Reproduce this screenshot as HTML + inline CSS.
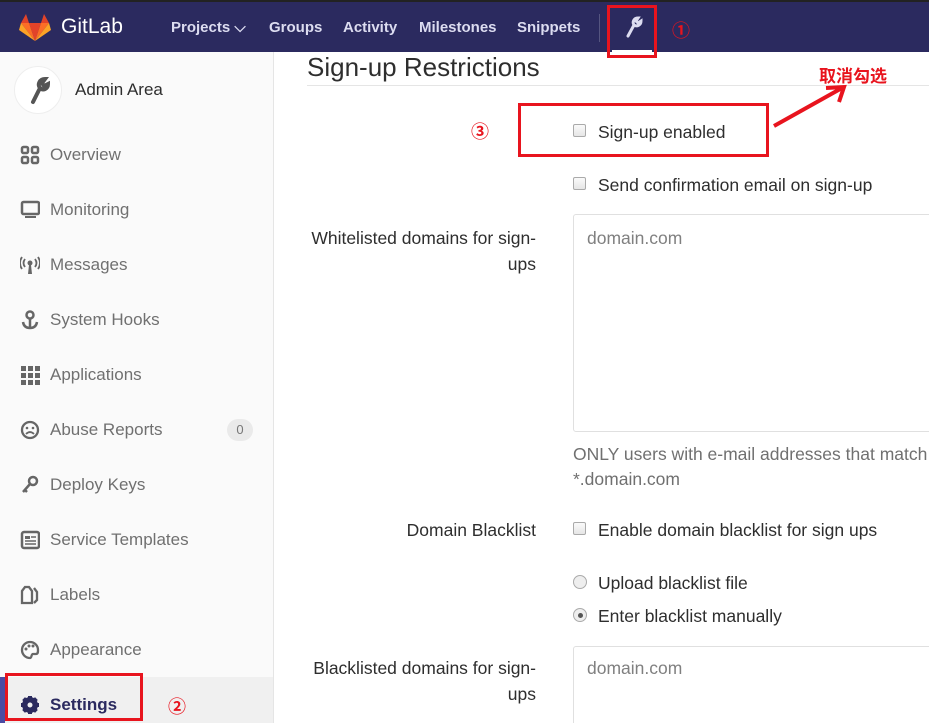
<!DOCTYPE html>
<html><head><meta charset="utf-8"><style>
*{box-sizing:border-box;margin:0;padding:0}
html,body{width:929px;height:723px;overflow:hidden}
body{background:#fff;font-family:"Liberation Sans","Noto Sans CJK SC",sans-serif;position:relative}
.nav{position:absolute;left:0;top:0;width:929px;height:52px;background:#2b2a5f;border-top:2px solid #222}
.nav span{position:absolute;top:17px;color:#dcdcf0;font-size:15px;font-weight:bold}
.side{position:absolute;left:0;top:52px;width:274px;height:671px;background:#fafafa;border-right:1px solid #e5e5e5}
.it{position:absolute;left:50px;font-size:17px;color:#707070}
.ab{position:absolute;font-size:17.5px;color:#2e2e2e;white-space:nowrap}
.lbl{position:absolute;right:393px;text-align:right;font-size:17.5px;color:#2e2e2e;line-height:26px;white-space:nowrap}
.cb{position:absolute;left:573px;width:13px;height:13px;border:1px solid #aaa;border-radius:2px;background:linear-gradient(#fafafa,#e6e6e6)}
.rd{position:absolute;left:573px;width:14px;height:14px;border:1px solid #aaa;border-radius:50%;background:#eee}
.ta{position:absolute;left:573px;width:400px;border:1px solid #e0e0e0;border-radius:3px}
.ph{position:absolute;font-size:17.5px;color:#808080}
.red{position:absolute;border:3px solid #e8141e}
.num{position:absolute;color:#e8141e;font-size:18px;font-weight:bold;font-family:"Noto Sans CJK SC",sans-serif}
</style></head><body>
<div class="nav">
<svg style="position:absolute;left:19px;top:10px" width="32" height="30" viewBox="0 0 32 30"><path d="M16 29L22 11H10Z" fill="#e24329"/><path d="M16 29L10 11H2Z" fill="#fc6d26"/><path d="M2 11L0 18L16 29Z" fill="#fca326"/><path d="M2 11H10L7 2Z" fill="#e24329"/><path d="M16 29L22 11H30Z" fill="#fc6d26"/><path d="M30 11L32 18L16 29Z" fill="#fca326"/><path d="M30 11H22L25 2Z" fill="#e24329"/></svg>
<span style="left:61px;top:13px;font-size:21px;font-weight:normal;color:#fff">GitLab</span>
<span style="left:171px">Projects ⌵</span>
<span style="left:269px">Groups</span>
<span style="left:343px">Activity</span>
<span style="left:419px">Milestones</span>
<span style="left:517px">Snippets</span>
<div style="position:absolute;left:599px;top:12px;width:1px;height:28px;background:#555580"></div>
<svg style="position:absolute;left:624px;top:14px" width="20" height="22" viewBox="0 0 20 22"><path d="M4 20L10 9M10 9C8 6 10 2 14 2L12 5L14 7L17 5C17 9 13 11 10 9" stroke="#dcdcf0" stroke-width="3" fill="none" stroke-linecap="round"/></svg>
<div style="position:absolute;left:612px;top:48px;width:40px;height:2px;background:#fff"></div>
</div>
<div class="side">
<div style="position:absolute;left:14px;top:14px;width:48px;height:48px;border-radius:50%;background:#fff;border:1px solid #eee"></div>
<svg style="position:absolute;left:28px;top:25px" width="22" height="28" viewBox="0 0 22 28"><path d="M5 25L12 11M12 11C9 7 12 2 17 2L14 6L16 9L20 7C20 12 15 14 12 11" stroke="#555" stroke-width="4" fill="none" stroke-linecap="round"/></svg>
<div class="ab" style="left:75px;top:28px;font-size:17px">Admin Area</div>
</div>
<div class="it" style="top:145px">Overview</div>
<div class="it" style="top:200px">Monitoring</div>
<div class="it" style="top:255px">Messages</div>
<div class="it" style="top:310px">System Hooks</div>
<div class="it" style="top:365px">Applications</div>
<div class="it" style="top:420px">Abuse Reports</div>
<div style="position:absolute;left:227px;top:419px;width:26px;height:22px;border-radius:11px;background:#eaeaea;color:#777;font-size:13px;text-align:center;line-height:22px">0</div>
<div class="it" style="top:475px">Deploy Keys</div>
<div class="it" style="top:530px">Service Templates</div>
<div class="it" style="top:585px">Labels</div>
<div class="it" style="top:640px">Appearance</div>
<div style="position:absolute;left:0;top:677px;width:273px;height:46px;background:#f0f0f0"></div>
<div style="position:absolute;left:0;top:677px;width:5px;height:46px;background:#4b4ba3"></div>
<div class="it" style="top:695px;color:#2b2a5f;font-weight:bold">Settings</div>
<svg style="position:absolute;left:20px;top:145px" width="20" height="20"><g fill="none" stroke="#666" stroke-width="2.5"><rect x="2" y="2" width="6" height="6" rx="1.5"/><rect x="12" y="2" width="6" height="6" rx="1.5"/><rect x="2" y="12" width="6" height="6" rx="1.5"/><rect x="12" y="12" width="6" height="6" rx="1.5"/></g></svg>
<svg style="position:absolute;left:20px;top:200px" width="20" height="20"><rect x="2" y="2" width="17" height="12" rx="1.5" fill="none" stroke="#666" stroke-width="2.5"/><rect x="5" y="16" width="11" height="2" fill="#666"/></svg>
<svg style="position:absolute;left:20px;top:255px" width="20" height="20"><circle cx="10" cy="8" r="2.5" fill="#666"/><path d="M9 10L8 19H12L11 10" fill="#666"/><path d="M5 4Q2 8 5 12M15 4Q18 8 15 12M2 2Q-2 8 2 14M18 2Q22 8 18 14" stroke="#666" stroke-width="1.8" fill="none"/></svg>
<svg style="position:absolute;left:20px;top:310px" width="20" height="20"><circle cx="10" cy="5" r="3.5" fill="none" stroke="#666" stroke-width="2.5"/><path d="M10 8V18M3 12Q4 18 10 18Q16 18 17 12" stroke="#666" stroke-width="2.5" fill="none"/></svg>
<svg style="position:absolute;left:20px;top:365px" width="20" height="20" fill="#666"><rect x="1" y="1" width="5" height="5"/><rect x="8" y="1" width="5" height="5"/><rect x="15" y="1" width="5" height="5"/><rect x="1" y="8" width="5" height="5"/><rect x="8" y="8" width="5" height="5"/><rect x="15" y="8" width="5" height="5"/><rect x="1" y="15" width="5" height="5"/><rect x="8" y="15" width="5" height="5"/><rect x="15" y="15" width="5" height="5"/></svg>
<svg style="position:absolute;left:20px;top:420px" width="20" height="20"><circle cx="10" cy="10" r="8" fill="none" stroke="#666" stroke-width="2.3"/><circle cx="7" cy="8" r="1.3" fill="#666"/><circle cx="13" cy="8" r="1.3" fill="#666"/><path d="M6 14Q10 10 14 14" stroke="#666" stroke-width="1.8" fill="none"/></svg>
<svg style="position:absolute;left:20px;top:475px" width="20" height="20"><circle cx="13" cy="6" r="4" fill="none" stroke="#666" stroke-width="2.5"/><path d="M10 9L3 17M5 15L7 17" stroke="#666" stroke-width="2.5"/></svg>
<svg style="position:absolute;left:20px;top:530px" width="20" height="20"><rect x="2" y="2" width="17" height="16" rx="2" fill="none" stroke="#666" stroke-width="2.5"/><rect x="5" y="6" width="5" height="3" fill="#666"/><path d="M11 7H16M5 11H16M5 14H16" stroke="#666" stroke-width="1.5"/></svg>
<svg style="position:absolute;left:20px;top:585px" width="20" height="20"><path d="M2 6L5 2H9L12 6V18H2Z" fill="none" stroke="#666" stroke-width="2.3"/><path d="M14 3L17 7V15L14 18" fill="none" stroke="#666" stroke-width="2.3"/></svg>
<svg style="position:absolute;left:20px;top:640px" width="20" height="20"><path d="M10 2A8 8 0 1 0 10 18C12 18 11 14 13 14H16C18 14 18 12 18 10A8 8 0 0 0 10 2Z" fill="none" stroke="#666" stroke-width="2.3"/><circle cx="6" cy="9" r="1.5" fill="#666"/><circle cx="9" cy="6" r="1.5" fill="#666"/><circle cx="13" cy="6" r="1.5" fill="#666"/></svg>
<svg style="position:absolute;left:20px;top:695px" width="20" height="20"><circle cx="10" cy="10" r="6" fill="none" stroke="#2b2a5f" stroke-width="4"/><g stroke="#2b2a5f" stroke-width="4"><path d="M10 1V19M1 10H19M3.6 3.6L16.4 16.4M16.4 3.6L3.6 16.4"/></g><circle cx="10" cy="10" r="2.5" fill="#f0f0f0"/></svg>

<div class="ab" style="left:307px;top:52px;font-size:26px">Sign-up Restrictions</div>
<div style="position:absolute;left:307px;top:85px;width:622px;height:1px;background:#e5e5e5"></div>
<div class="cb" style="top:124px"></div><div class="ab" style="left:598px;top:122px">Sign-up enabled</div>
<div class="cb" style="top:177px"></div><div class="ab" style="left:598px;top:175px">Send confirmation email on sign-up</div>
<div class="lbl" style="top:225px">Whitelisted domains for sign-<br>ups</div>
<div class="ta" style="top:214px;height:218px"></div>
<div class="ph" style="left:587px;top:228px">domain.com</div>
<div class="ab" style="left:573px;top:442px;color:#707070;line-height:25px">ONLY users with e-mail addresses that match the<br>*.domain.com</div>
<div class="lbl" style="top:517px">Domain Blacklist</div>
<div class="cb" style="top:522px"></div><div class="ab" style="left:598px;top:520px">Enable domain blacklist for sign ups</div>
<div class="rd" style="top:575px"></div><div class="ab" style="left:598px;top:573px">Upload blacklist file</div>
<div class="rd" style="top:608px"></div><div style="position:absolute;left:578px;top:613px;width:5px;height:5px;border-radius:50%;background:#555"></div><div class="ab" style="left:598px;top:606px">Enter blacklist manually</div>
<div class="lbl" style="top:655px">Blacklisted domains for sign-<br>ups</div>
<div class="ta" style="top:646px;height:100px"></div>
<div class="ph" style="left:587px;top:658px">domain.com</div>

<div class="red" style="left:607px;top:5px;width:50px;height:53px"></div>
<div class="red" style="left:518px;top:103px;width:251px;height:54px"></div>
<div class="red" style="left:5px;top:673px;width:138px;height:48px"></div>
<div class="num" style="left:672px;top:17px">①</div>
<div class="num" style="left:168px;top:693px">②</div>
<div class="num" style="left:471px;top:118px">③</div>
<svg style="position:absolute;left:770px;top:80px" width="80" height="52"><path d="M4 46L72 8M56 8L74 7L69 22" stroke="#e8141e" stroke-width="4" fill="none"/></svg>
<div style="position:absolute;left:819px;top:62px;color:#e8141e;font-size:17px;font-weight:bold;font-family:'Noto Sans CJK SC',sans-serif">取消勾选</div>
</body></html>
